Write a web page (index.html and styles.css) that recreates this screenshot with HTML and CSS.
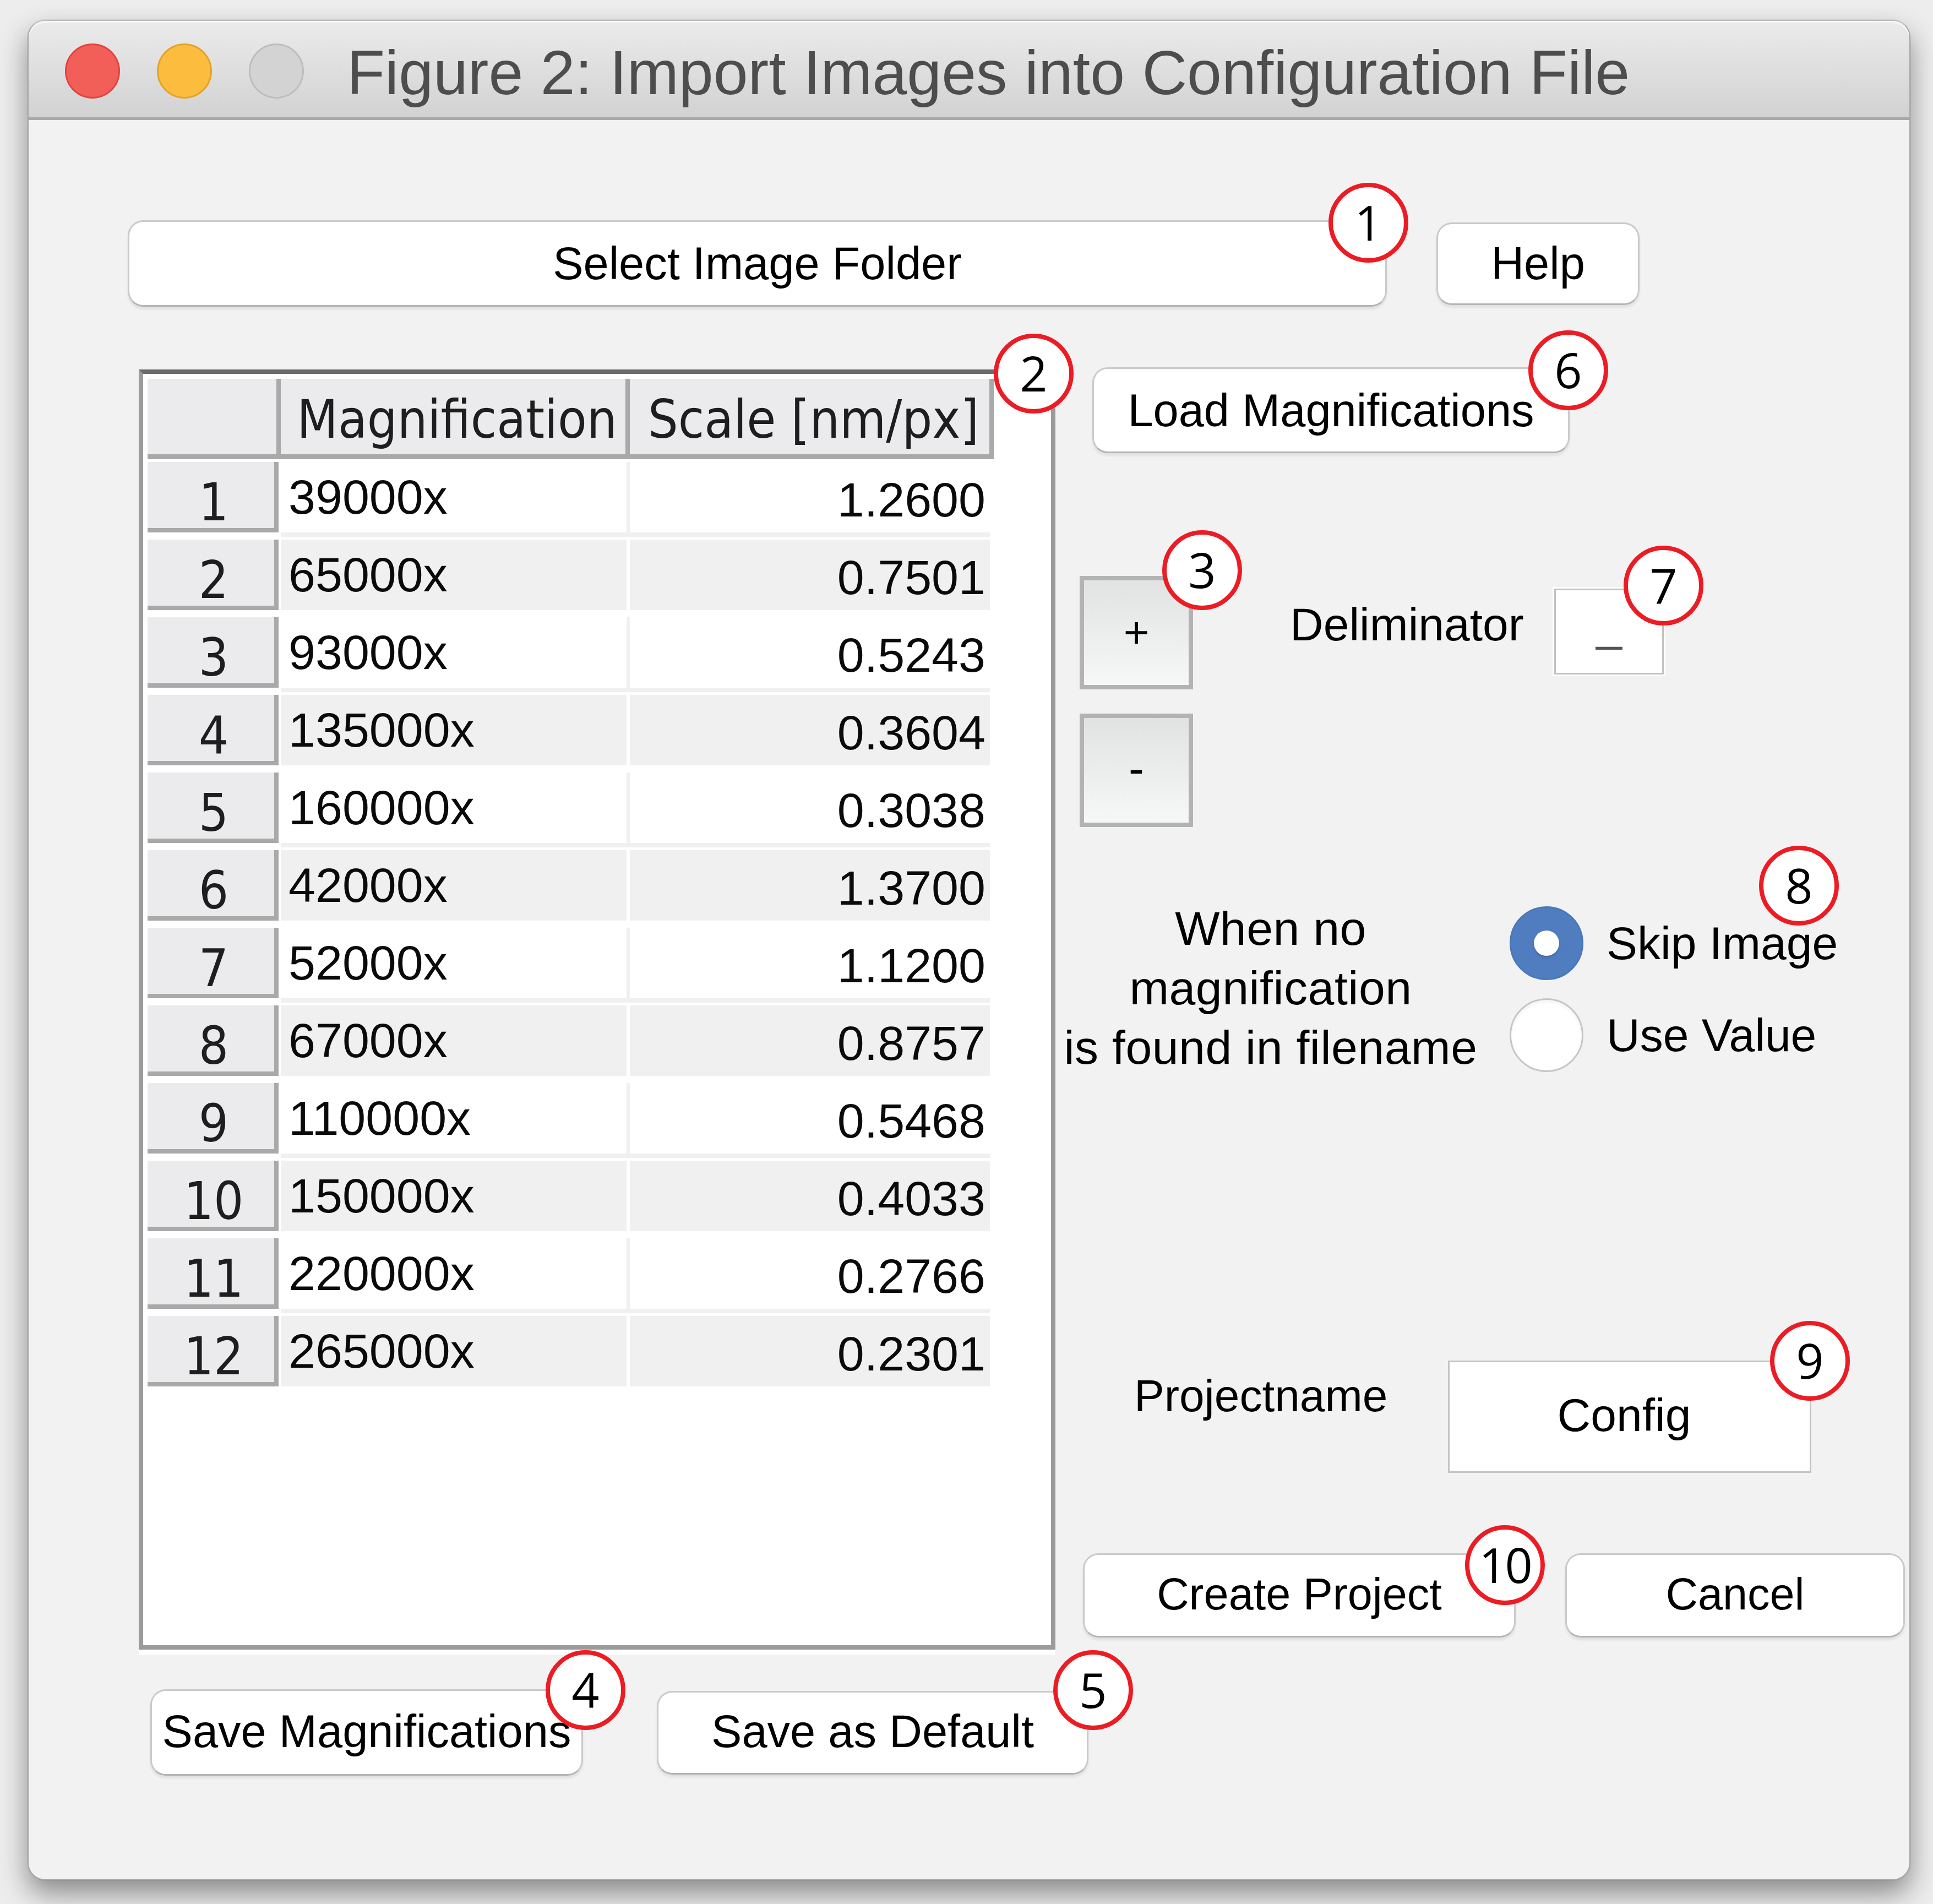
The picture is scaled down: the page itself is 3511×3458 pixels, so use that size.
FILE: index.html
```html
<!DOCTYPE html>
<html lang="en">
<head>
<meta charset="utf-8">
<title>Figure 2: Import Images into Configuration File</title>
<link rel="stylesheet" href="styles.css">
</head>
<body>
<div class="window">
  <div class="titlebar">
    <span class="light red"></span>
    <span class="light yellow"></span>
    <span class="light gray"></span>
    <span class="title">Figure 2: Import Images into Configuration File</span>
  </div>

  <div class="content">
    <div class="top-row">
      <button class="btn select">Select Image Folder</button>
      <button class="btn help">Help</button>
    </div>

    <div class="middle">
      <div class="tbl">
        <div class="thead">
          <div class="th corner"></div>
          <div class="th">Magnification</div>
          <div class="th">Scale [nm/px]</div>
        </div>
        <div class="trow odd"><div class="rh">1</div><div class="td mag">39000x</div><div class="td scale">1.2600</div></div>
        <div class="trow even"><div class="rh">2</div><div class="td mag">65000x</div><div class="td scale">0.7501</div></div>
        <div class="trow odd"><div class="rh">3</div><div class="td mag">93000x</div><div class="td scale">0.5243</div></div>
        <div class="trow even"><div class="rh">4</div><div class="td mag">135000x</div><div class="td scale">0.3604</div></div>
        <div class="trow odd"><div class="rh">5</div><div class="td mag">160000x</div><div class="td scale">0.3038</div></div>
        <div class="trow even"><div class="rh">6</div><div class="td mag">42000x</div><div class="td scale">1.3700</div></div>
        <div class="trow odd"><div class="rh">7</div><div class="td mag">52000x</div><div class="td scale">1.1200</div></div>
        <div class="trow even"><div class="rh">8</div><div class="td mag">67000x</div><div class="td scale">0.8757</div></div>
        <div class="trow odd"><div class="rh">9</div><div class="td mag">110000x</div><div class="td scale">0.5468</div></div>
        <div class="trow even"><div class="rh">10</div><div class="td mag">150000x</div><div class="td scale">0.4033</div></div>
        <div class="trow odd"><div class="rh">11</div><div class="td mag">220000x</div><div class="td scale">0.2766</div></div>
        <div class="trow even"><div class="rh">12</div><div class="td mag">265000x</div><div class="td scale">0.2301</div></div>
      </div>

      <div class="side">
        <button class="btn load">Load Magnifications</button>

        <div class="pm-row">
          <div class="pm">
            <div class="sq">+</div>
            <div class="sq minus">-</div>
          </div>
          <div class="delim">
            <span class="delim-lbl">Deliminator</span>
            <div class="delim-box">_</div>
          </div>
        </div>

        <div class="nomag">
          <p class="nomag-text">When no<br>magnification<br>is found in filename</p>
          <div class="radios">
            <div class="radio"><span class="dot on"></span><span class="radio-lbl">Skip Image</span></div>
            <div class="radio"><span class="dot"></span><span class="radio-lbl">Use Value</span></div>
          </div>
        </div>

        <div class="proj">
          <div class="proj-lbl"><span>Projectname</span></div>
          <div class="proj-box">Config</div>
        </div>

        <div class="actions">
          <button class="btn create">Create Project</button>
          <button class="btn cancel">Cancel</button>
        </div>
      </div>
    </div>

    <div class="bottom-row">
      <button class="btn savemag">Save Magnifications</button>
      <button class="btn savedef">Save as Default</button>
    </div>
  </div>

  <span class="note n1">1</span>
  <span class="note n2">2</span>
  <span class="note n3">3</span>
  <span class="note n4">4</span>
  <span class="note n5">5</span>
  <span class="note n6">6</span>
  <span class="note n7">7</span>
  <span class="note n8">8</span>
  <span class="note n9">9</span>
  <span class="note n10">10</span>
</div>
</body>
</html>
```

FILE: styles.css
```css
* { box-sizing: border-box; }

html, body {
  margin: 0;
  width: 3511px;
  height: 3458px;
  overflow: hidden;
}

body {
  background: #ededed;
  padding: 36px 0 0 50px;
  font-family: "Liberation Sans", Arial, sans-serif;
  color: #000;
}

.window {
  position: relative;
  width: 3420px;
  height: 3379px;
  background: #f2f2f2;
  border: 2px solid #a9a9a9;
  border-top-color: #bdbdbd;
  border-radius: 32px;
  box-shadow: 0 24px 50px rgba(0, 0, 0, 0.42), 0 0 0 1px rgba(0, 0, 0, 0.06);
}

/* ---------- title bar ---------- */
.titlebar {
  height: 180px;
  display: flex;
  align-items: center;
  padding: 7px 0 0 66px;
  background: linear-gradient(#ebebeb, #d2d2d2);
  border-bottom: 5px solid #a8a8a8;
  border-radius: 30px 30px 0 0;
  box-shadow: inset 0 4px 0 #f4f4f4;
}

.light {
  width: 100px;
  height: 100px;
  border-radius: 50%;
  margin-right: 67px;
  flex: none;
}
.light.red { background: #f25f58; border: 3px solid #e3433d; }
.light.yellow { background: #fcbc3d; border: 3px solid #e2a22a; }
.light.gray { background: #d3d3d3; border: 3px solid #bdbdbd; margin-right: 78px; }

.title {
  font-size: 113px;
  line-height: 1;
  color: #4d4d4d;
  margin-top: 7px;
  white-space: nowrap;
}

/* ---------- generic button ---------- */
.btn {
  -webkit-appearance: none;
  appearance: none;
  margin: 0;
  padding: 0;
  font-family: "Liberation Sans", Arial, sans-serif;
  font-size: 83px;
  color: #000;
  background: #fff;
  border: 3px solid #cacaca;
  border-bottom-color: #b4b4b4;
  border-radius: 28px;
  box-shadow: 0 5px 4px rgba(0, 0, 0, 0.07);
  display: flex;
  align-items: center;
  justify-content: center;
  white-space: nowrap;
  line-height: 1;
  flex: none;
}

/* ---------- layout ---------- */
.content {
  display: flex;
  flex-direction: column;
}

.top-row {
  display: flex;
  align-items: center;
  margin: 182px 0 0 180px;
}
.select { width: 2287px; height: 157px; }
.help { width: 369px; height: 150px; margin-left: 90px; }

.middle {
  display: flex;
  align-items: flex-start;
  margin-top: 110px;
}

/* ---------- table ---------- */
.tbl {
  width: 1665px;
  height: 2325px;
  margin: 4px 0 0 200px;
  background: #fff;
  border: 8px solid #9b9b9b;
  border-top-color: #6b6b6b;
  padding: 9px 0 0 8px;
  box-shadow: 0 9px 0 #fff;
  flex: none;
}

.thead,
.trow {
  display: grid;
  grid-template-columns: 242px 634px 661px;
}

.th {
  height: 146px;
  background: #ebebed;
  border-right: 8px solid #a9a9a9;
  border-bottom: 9px solid #a9a9a9;
  font-family: "DejaVu Sans Condensed", "DejaVu Sans", sans-serif;
  font-stretch: condensed;
  font-size: 96px;
  line-height: 1;
  color: #1e1e1e;
  display: flex;
  justify-content: center;
  align-items: center;
  padding: 11px 0 0 14px;
  white-space: nowrap;
}

.thead { margin-bottom: 5px; }

.trow { height: 141px; }

.rh {
  height: 128px;
  margin-right: 4px;
  background: #ebebed;
  border-right: 8px solid #a9a9a9;
  border-bottom: 8px solid #a9a9a9;
  font-family: "DejaVu Sans Condensed", "DejaVu Sans", sans-serif;
  font-stretch: condensed;
  font-size: 95px;
  line-height: 95px;
  color: #1e1e1e;
  text-align: center;
  padding: 26px 0 0 10px;
}

.td {
  height: 136px;
  font-size: 88px;
  line-height: 1;
  display: flex;
  align-items: center;
  border-bottom: 8px solid;
  white-space: nowrap;
  color: #0a0a0a;
}
.td.mag { padding-left: 14px; border-right: 6px solid; }
.td.scale { justify-content: flex-end; padding: 10px 8px 0 0; margin-right: 7px; }

.trow.odd .td { background: #fff; border-color: #f0f0f0; }
.trow.even .td { background: #f0f0f0; border-color: #fff; }

/* ---------- right side ---------- */
.side {
  margin-left: 34px;
  display: flex;
  flex-direction: column;
  align-items: flex-start;
}

.load { width: 867px; height: 156px; margin-left: 33px; }

.pm-row {
  display: flex;
  align-items: flex-start;
  margin-top: 223px;
}

.pm {
  margin-left: 10px;
  display: flex;
  flex-direction: column;
  gap: 44px;
}

.sq {
  width: 206px;
  height: 206px;
  border: 8px solid #b3b3b3;
  background: linear-gradient(#e1e2e2, #f6f7f7);
  display: flex;
  align-items: center;
  justify-content: center;
  font-size: 80px;
  line-height: 1;
}
.sq.minus { font-size: 84px; padding-bottom: 8px; }

.delim {
  display: flex;
  align-items: center;
  height: 156px;
  margin: 23px 0 0 176px;
}

.delim-lbl {
  width: 480px;
  font-size: 84px;
  line-height: 1;
  margin-bottom: 26px;
  white-space: nowrap;
}

.delim-box {
  width: 199px;
  height: 156px;
  background: #fff;
  border: 3px solid #c2c2c2;
  box-shadow: 0 0 0 3px #fff;
  display: flex;
  align-items: center;
  justify-content: center;
  font-size: 84px;
  line-height: 1;
  color: #555;
  padding-bottom: 26px;
}

.nomag {
  display: flex;
  align-items: flex-start;
  margin-top: 130px;
}

.nomag-text {
  margin: 0 0 0 -23px;
  width: 760px;
  font-size: 86px;
  line-height: 108px;
  text-align: center;
  white-space: nowrap;
  letter-spacing: 0.5px;
}

.radios {
  margin: 14px 0 0 54px;
  display: flex;
  flex-direction: column;
  gap: 33px;
}

.radio {
  display: flex;
  align-items: center;
  height: 134px;
}

.dot {
  width: 134px;
  height: 134px;
  border-radius: 50%;
  background: #fff;
  border: 3px solid #c6c6c6;
  box-shadow: inset 0 4px 6px rgba(0, 0, 0, 0.05);
  display: flex;
  align-items: center;
  justify-content: center;
  flex: none;
}
.dot.on {
  background: #507cc0;
  border-color: #4b77bb;
  box-shadow: none;
}
.dot.on::after {
  content: "";
  width: 46px;
  height: 46px;
  border-radius: 50%;
  background: #fff;
  box-shadow: 0 3px 4px rgba(0, 0, 0, 0.15);
}

.radio-lbl {
  margin-left: 42px;
  font-size: 84px;
  line-height: 1;
  white-space: nowrap;
}

.proj {
  display: flex;
  align-items: center;
  margin-top: 515px;
}

.proj-lbl {
  width: 679px;
  padding-left: 109px;
  font-size: 82px;
  line-height: 1;
  margin-bottom: 76px;
  white-space: nowrap;
}

.proj-box {
  width: 660px;
  height: 204px;
  background: #fff;
  border: 3px solid #c4c4c4;
  display: flex;
  align-items: center;
  justify-content: center;
  font-size: 84px;
  line-height: 1;
  padding: 0 20px 6px 0;
}

.actions {
  display: flex;
  align-items: center;
  margin: 146px 0 0 16px;
}
.create { width: 786px; height: 153px; font-size: 81px; padding-bottom: 4px; }
.cancel { width: 617px; height: 153px; margin-left: 90px; font-size: 81px; padding-bottom: 4px; }

/* ---------- bottom row ---------- */
.bottom-row {
  display: flex;
  align-items: center;
  margin: 72px 0 0 221px;
}
.savemag { width: 786px; height: 157px; padding-bottom: 4px; }
.savedef { width: 784px; height: 152px; margin-left: 134px; padding-bottom: 4px; }

/* ---------- annotation markers ---------- */
.note {
  position: absolute;
  width: 145px;
  height: 145px;
  border-radius: 50%;
  border: 8px solid #ec1c24;
  background: #fff;
  display: flex;
  align-items: center;
  justify-content: center;
  font-family: "Open Sans", "Noto Sans", sans-serif;
  font-size: 88px;
  line-height: 1;
  color: #000;
  padding-bottom: 4px;
}
.n1 { left: 2361px; top: 294px; }
.n2 { left: 1753px; top: 568px; }
.n3 { left: 2059px; top: 925px; }
.n4 { left: 939px; top: 2959px; }
.n5 { left: 1861px; top: 2959px; }
.n6 { left: 2724px; top: 562px; }
.n7 { left: 2897px; top: 953px; }
.n8 { left: 3143px; top: 1498px; }
.n9 { left: 3163px; top: 2361px; }
.n10 { left: 2609px; top: 2732px; letter-spacing: -3px; }
```
